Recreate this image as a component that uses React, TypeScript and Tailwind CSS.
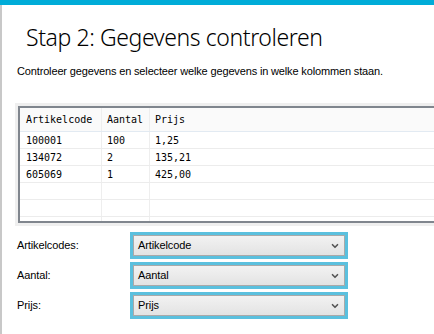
import { ChevronDown } from "lucide-react";

const rows = [
  ["100001", "100", "1,25"],
  ["134072", "2", "135,21"],
  ["605069", "1", "425,00"],
  ["", "", ""],
  ["", "", ""],
];

const mappings = [
  { label: "Artikelcodes:", value: "Artikelcode" },
  { label: "Aantal:", value: "Aantal" },
  { label: "Prijs:", value: "Prijs" },
];

function Select({ value }: { value: string }) {
  return (
    <div className="h-[27px] w-[218px] border-[3px] border-[#5bc0de]">
      <div className="flex h-full items-center justify-between border border-[#a9a9a9] bg-gradient-to-b from-[#f2f2f2] to-[#e3e3e3] pl-[4px] pr-[4px]">
        <span className="text-[11px] tracking-[-0.1px] text-black">{value}</span>
        <ChevronDown size={10} strokeWidth={4} className="text-[#555]" />
      </div>
    </div>
  );
}

export default function App() {
  return (
    <div className="h-[334px] w-[434px] overflow-hidden bg-white font-['Liberation_Sans',Arial,sans-serif]">
      <div className="h-[5px] bg-[#00acd8]" />
      <div className="h-[329px] border-l-2 border-[#c8c8c8] pl-[13px]">
        <h1 className="ml-[11px] pt-[16px] font-['Noto_Sans',sans-serif] text-[23px] font-light leading-[32px] tracking-[-0.4px] text-black">
          Stap 2: Gegevens controleren
        </h1>
        <p className="ml-[2px] mt-[10px] text-[11px] leading-[16px] tracking-[-0.15px] text-black">
          Controleer gegevens en selecteer welke gegevens in welke kolommen staan.
        </p>

        <div className="mt-[24px] w-[460px] bg-[#efefef] p-[3px]">
          <div className="border-2 border-[#80868e] bg-white font-['DejaVu_Sans_Mono',monospace] text-[10px] text-black">
            <div className="flex h-[24px] items-center border-b border-[#e2eaf2] bg-[#fafafa]">
              <div className="flex h-full w-[82px] items-center border-r border-[#eeeeee] pl-[6px]">Artikelcode</div>
              <div className="flex h-full w-[48px] items-center border-r border-[#eeeeee] pl-[5px]">Aantal</div>
              <div className="flex h-full flex-1 items-center pl-[5px]">Prijs</div>
            </div>
            {rows.map((r, i) => (
              <div key={i} className="flex h-[17px] items-center border-b border-[#ececec]">
                <div className="flex h-full w-[82px] items-center border-r border-[#eeeeee] pl-[6px]">{r[0]}</div>
                <div className="flex h-full w-[48px] items-center border-r border-[#eeeeee] pl-[5px]">{r[1]}</div>
                <div className="flex h-full flex-1 items-center pl-[5px]">{r[2]}</div>
              </div>
            ))}
            <div className="flex h-[4px]">
              <div className="w-[82px] border-r border-[#eeeeee]" />
              <div className="w-[48px] border-r border-[#eeeeee]" />
            </div>
          </div>
        </div>

        <div className="mt-[6px] flex flex-col gap-[3px]">
          {mappings.map((m) => (
            <div key={m.label} className="flex items-center">
              <span className="w-[115px] pl-[2px] text-[11px] tracking-[-0.1px] text-black">{m.label}</span>
              <Select value={m.value} />
            </div>
          ))}
        </div>
      </div>
    </div>
  );
}
